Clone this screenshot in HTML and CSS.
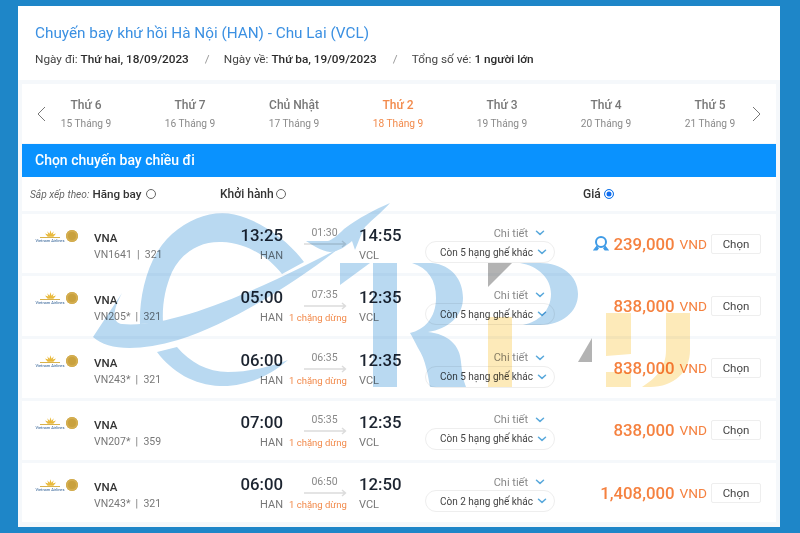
FILE: index.html
```html
<!DOCTYPE html>
<html lang="vi">
<head>
<meta charset="utf-8">
<title>Chuyến bay</title>
<link rel="stylesheet" href="styles.css">
</head>
<body>
<svg width="0" height="0" class="defs">
  <symbol id="chev" viewBox="0 0 10 6"><path d="M1.5 1.2l3.5 3.2 3.5-3.2" fill="none" stroke="#5aa9dc" stroke-width="1.5" stroke-linecap="round" stroke-linejoin="round"/></symbol>
  <symbol id="arrow" viewBox="0 0 43 8"><path d="M0 4h41M38 1l3.5 3L38 7" fill="none" stroke="#dcdcdc" stroke-width="1.4"/></symbol>
  <symbol id="lotus" viewBox="0 0 10 7"><path d="M5 0l.9 3.2L8 .9 7 4l3-.9L7.6 6H2.4L0 3.1 3 4 2 .9l2.1 2.3z" fill="#e9b93a"/></symbol>
</svg>
<div class="page">
  <main class="card">
    <header class="summary">
      <h1 class="title">Chuyến bay khứ hồi Hà Nội (HAN) - Chu Lai (VCL)</h1>
      <p class="meta">
        <span class="meta-a">Ngày đi: <b>Thứ hai, 18/09/2023</b></span><i class="slash">/</i>
        <span class="meta-a">Ngày về: <b>Thứ ba, 19/09/2023</b></span><i class="slash">/</i>
        <span class="meta-a">Tổng số vé: <b>1 người lớn</b></span>
      </p>
    </header>

    <nav class="dates">
      <span class="nav-arrow"><svg width="9" height="16" viewBox="0 0 9 16"><path d="M8 1L1 8l7 7" fill="none" stroke="#777" stroke-width="1"/></svg></span>
      <div class="date-list">
        <div class="date"><strong>Thứ 6</strong><span>15 Tháng 9</span></div>
        <div class="date"><strong>Thứ 7</strong><span>16 Tháng 9</span></div>
        <div class="date"><strong>Chủ Nhật</strong><span>17 Tháng 9</span></div>
        <div class="date active"><strong>Thứ 2</strong><span>18 Tháng 9</span></div>
        <div class="date"><strong>Thứ 3</strong><span>19 Tháng 9</span></div>
        <div class="date"><strong>Thứ 4</strong><span>20 Tháng 9</span></div>
        <div class="date"><strong>Thứ 5</strong><span>21 Tháng 9</span></div>
      </div>
      <span class="nav-arrow"><svg width="9" height="16" viewBox="0 0 9 16"><path d="M1 1l7 7-7 7" fill="none" stroke="#777" stroke-width="1"/></svg></span>
    </nav>

    <h2 class="bar">Chọn chuyến bay chiều đi</h2>

    <div class="sort">
      <div class="sort-a"><em>Sắp xếp theo:</em> <span>Hãng bay</span><i class="radio"></i></div>
      <div class="sort-b"><span class="strong">Khởi hành</span><i class="radio"></i></div>
      <div class="sort-c"><span class="strong">Giá</span><i class="radio on"></i></div>
    </div>

    <section class="row">
      <div class="logo"><div class="mark"><svg class="lotus" width="11" height="8"><use href="#lotus"/></svg><span class="rule"></span><span class="va">Vietnam Airlines</span></div><i class="sun"></i></div>
      <div class="air"><b>VNA</b><span>VN1641 &nbsp;|&nbsp; 321</span></div>
      <div class="dep"><b>13:25</b><span>HAN</span></div>
      <div class="route"><span>01:30</span><svg width="43" height="8"><use href="#arrow"/></svg></div>
      <div class="arr"><b>14:55</b><span>VCL</span></div>
      <div class="more"><div class="detail">Chi tiết<svg width="10" height="6"><use href="#chev"/></svg></div><div class="pill">Còn 5 hạng ghế khác<svg width="10" height="6"><use href="#chev"/></svg></div></div>
      <div class="price"><svg class="award" width="16" height="17" viewBox="0 0 16 17"><circle cx="8" cy="7" r="5" fill="none" stroke="#3f9be6" stroke-width="2"/><path d="M4 11L1 15h3l1.5-2M12 11l3 4h-3l-1.5-2" fill="#3f9be6" stroke="#3f9be6" stroke-width="1.2"/></svg><b>239,000</b><span>VND</span></div>
      <button class="pick">Chọn</button>
    </section>

    <section class="row">
      <div class="logo"><div class="mark"><svg class="lotus" width="11" height="8"><use href="#lotus"/></svg><span class="rule"></span><span class="va">Vietnam Airlines</span></div><i class="sun"></i></div>
      <div class="air"><b>VNA</b><span>VN205* &nbsp;|&nbsp; 321</span></div>
      <div class="dep"><b>05:00</b><span>HAN</span></div>
      <div class="route"><span>07:35</span><svg width="43" height="8"><use href="#arrow"/></svg><em>1 chặng dừng</em></div>
      <div class="arr"><b>12:35</b><span>VCL</span></div>
      <div class="more"><div class="detail">Chi tiết<svg width="10" height="6"><use href="#chev"/></svg></div><div class="pill">Còn 5 hạng ghế khác<svg width="10" height="6"><use href="#chev"/></svg></div></div>
      <div class="price"><b>838,000</b><span>VND</span></div>
      <button class="pick">Chọn</button>
    </section>

    <section class="row">
      <div class="logo"><div class="mark"><svg class="lotus" width="11" height="8"><use href="#lotus"/></svg><span class="rule"></span><span class="va">Vietnam Airlines</span></div><i class="sun"></i></div>
      <div class="air"><b>VNA</b><span>VN243* &nbsp;|&nbsp; 321</span></div>
      <div class="dep"><b>06:00</b><span>HAN</span></div>
      <div class="route"><span>06:35</span><svg width="43" height="8"><use href="#arrow"/></svg><em>1 chặng dừng</em></div>
      <div class="arr"><b>12:35</b><span>VCL</span></div>
      <div class="more"><div class="detail">Chi tiết<svg width="10" height="6"><use href="#chev"/></svg></div><div class="pill">Còn 5 hạng ghế khác<svg width="10" height="6"><use href="#chev"/></svg></div></div>
      <div class="price"><b>838,000</b><span>VND</span></div>
      <button class="pick">Chọn</button>
    </section>

    <section class="row">
      <div class="logo"><div class="mark"><svg class="lotus" width="11" height="8"><use href="#lotus"/></svg><span class="rule"></span><span class="va">Vietnam Airlines</span></div><i class="sun"></i></div>
      <div class="air"><b>VNA</b><span>VN207* &nbsp;|&nbsp; 359</span></div>
      <div class="dep"><b>07:00</b><span>HAN</span></div>
      <div class="route"><span>05:35</span><svg width="43" height="8"><use href="#arrow"/></svg><em>1 chặng dừng</em></div>
      <div class="arr"><b>12:35</b><span>VCL</span></div>
      <div class="more"><div class="detail">Chi tiết<svg width="10" height="6"><use href="#chev"/></svg></div><div class="pill">Còn 5 hạng ghế khác<svg width="10" height="6"><use href="#chev"/></svg></div></div>
      <div class="price"><b>838,000</b><span>VND</span></div>
      <button class="pick">Chọn</button>
    </section>

    <section class="row">
      <div class="logo"><div class="mark"><svg class="lotus" width="11" height="8"><use href="#lotus"/></svg><span class="rule"></span><span class="va">Vietnam Airlines</span></div><i class="sun"></i></div>
      <div class="air"><b>VNA</b><span>VN243* &nbsp;|&nbsp; 321</span></div>
      <div class="dep"><b>06:00</b><span>HAN</span></div>
      <div class="route"><span>06:50</span><svg width="43" height="8"><use href="#arrow"/></svg><em>1 chặng dừng</em></div>
      <div class="arr"><b>12:50</b><span>VCL</span></div>
      <div class="more"><div class="detail">Chi tiết<svg width="10" height="6"><use href="#chev"/></svg></div><div class="pill">Còn 2 hạng ghế khác<svg width="10" height="6"><use href="#chev"/></svg></div></div>
      <div class="price"><b>1,408,000</b><span>VND</span></div>
      <button class="pick">Chọn</button>
    </section>
  </main>

  <svg class="watermark" width="800" height="533" viewBox="0 0 800 533">
    <g fill="#b9d9f1">
      <path d="M140 324C139 295 148 255 172 234C195 214 222 208 246 218C272 228 292 246 304 262L282 274C268 256 246 243 222 242C200 241 182 252 172 272C165 288 162 305 163 323Z"/>
      <path d="M93 337L122 293C112 312 112 322 122 324C165 328 235 300 300 268L338 249C300 279 235 322 178 340C140 351 108 351 93 337Z"/>
      <path d="M157 352L177 347C190 362 207 372 228 372C250 372 272 366 288 360C270 376 245 387 220 386C194 385 172 372 157 352Z"/>
      <path d="M390 203C376 209 358 218 344 229C338 235 332 240 328 241L306 241C312 245 322 251 330 252C338 252 346 246 352 241L355 250C358 243 361 234 365 227C373 219 384 210 390 203Z"/>
      <path d="M340 263H370L340 285Z"/>
      <path d="M373 263H397V387H373Z"/>
      <path d="M412 263H432C452 265 463 280 463 298C463 316 448 329 428 332C448 334 460 345 461 362C462 372 463 380 466 387H430C428 376 426 360 418 348C415 342 412 336 410 333C424 330 436 318 436 298C436 280 428 268 412 263Z"/>
      <path d="M520 263H540C562 263 578 276 578 294C578 312 562 325 540 325H523C538 322 551 311 551 294C551 278 538 266 520 263Z"/>
    </g>
    <g fill="#b3b3b3">
      <path d="M488 263H512L488 287Z"/>
      <path d="M592 338V362H578Z"/>
    </g>
    <g fill="#fdeab9">
      <path d="M488 317H512V387H488Z"/>
      <path d="M606 313H631V354L606 356ZM606 372H631V387H606Z"/>
      <path d="M666 313H690V350C690 372 674 387 650 387H642C656 378 666 368 666 350Z"/>
    </g>
  </svg>
</div>
</body>
</html>
```

FILE: styles.css
```css
* { box-sizing: border-box; }
html, body { margin: 0; padding: 0; }
body { width: 800px; height: 533px; overflow: hidden; background: #1e86c8; font-family: Roboto, "Noto Sans", sans-serif; }
.defs { position: absolute; }
.page { position: relative; width: 800px; height: 533px; padding: 6px 20px 6px 18px; filter: blur(0.4px); }
.card { height: 521px; padding: 0 4px; background: #f5f8fb; display: flex; flex-direction: column; }

.summary { height: 74px; margin: 0 -4px 4px; padding: 18px 0 0 17px; background: #fff; }
.title { margin: 0; font-size: 15.3px; line-height: 19px; font-weight: 400; color: #3b90e2; }
.meta { margin: 8px 0 0; display: flex; font-size: 11.8px; line-height: 16px; color: #444; }
.meta b { font-weight: 500; color: #2b2b2b; }
.slash { font-style: normal; color: #999; margin: 0 16px; width: 3px; }

.dates { height: 59px; margin-bottom: 1px; background: #fff; display: flex; align-items: center; }
.nav-arrow { display: flex; justify-content: center; }
.nav-arrow:first-child { width: 38px; }
.nav-arrow:last-child { flex: 1; }
.date-list { display: flex; gap: 52px; }
.date { width: 52px; display: flex; flex-direction: column; align-items: center; white-space: nowrap; color: #8a8a8a; }
.date strong { font-size: 12px; line-height: 16px; font-weight: 500; color: #777; }
.date span { font-size: 10.2px; line-height: 14px; margin-top: 4px; }
.date.active, .date.active strong { color: #f28a4b; }

.bar { margin: 0; height: 33px; padding-left: 13px; background: #0a92fe; color: #fff; font-size: 14px; line-height: 33px; font-weight: 500; }

.sort { height: 34px; background: #fff; display: grid; grid-template-columns: 198px 363px 1fr; align-items: center; margin-bottom: 3px; font-size: 12px; color: #333; }
.sort-a { padding-left: 8px; display: flex; align-items: center; gap: 3px; white-space: nowrap; }
.sort-a em { font-size: 10.2px; color: #666; }
.sort-a span { font-size: 11.7px; font-weight: 500; color: #333; }
.sort-a .radio { margin-left: 1px; }
.sort-b, .sort-c { display: flex; align-items: center; }
.strong { font-weight: 500; }
.radio { width: 10px; height: 10px; margin-left: 2px; border: 1px solid #666; border-radius: 50%; background: #fff; }
.radio.on { margin-left: 3px; border-color: #1677e8; background: #0d6cf0; box-shadow: inset 0 0 0 1.5px #fff; }

.row { height: 59.25px; margin-bottom: 3px; background: #fff; display: grid; grid-template-columns: 72px 130px 59px 76px 66px 130px 153px 50px; align-items: stretch; }
.row:last-child { margin-bottom: 0; }

.logo { padding: 16px 0 0 13px; display: flex; align-items: flex-start; gap: 1px; }
.mark { width: 30px; display: flex; flex-direction: column; align-items: center; }
.lotus { display: block; }
.rule { display: block; width: 20px; height: 1px; margin-top: -1px; background: #d9b24a; }
.va { font-size: 4px; line-height: 4px; margin-top: 1px; color: #2a5b92; white-space: nowrap; }
.sun { width: 12px; height: 12px; border-radius: 50%; background: #c9a13e; box-shadow: inset 0 0 0 2px #d4ae50; }

.air { padding-top: 17px; display: flex; flex-direction: column; }
.air b { font-size: 11.5px; line-height: 14px; font-weight: 500; color: #333; }
.air span { margin-top: 3px; font-size: 10.5px; line-height: 14px; color: #777; white-space: nowrap; }

.dep, .arr { padding-top: 10px; display: flex; flex-direction: column; }
.dep { align-items: flex-end; }
.dep b, .arr b { font-size: 16.8px; line-height: 22px; font-weight: 500; color: #1c2430; }
.dep span, .arr span { margin-top: 3px; font-size: 11px; line-height: 14px; color: #777; }

.route { padding: 12px 0 0 21px; display: flex; flex-direction: column; align-items: flex-start; }
.route span { width: 41px; text-align: center; font-size: 10.5px; line-height: 14px; color: #888; }
.route svg { display: block; }
.route em { margin: 1px 0 0 -15px; font-style: normal; font-size: 9.5px; line-height: 14px; color: #f28a4b; white-space: nowrap; }

.more { display: flex; flex-direction: column; align-items: stretch; padding-top: 11px; }
.detail { height: 16px; padding-right: 10px; display: flex; align-items: center; justify-content: flex-end; gap: 7px; font-size: 11px; color: #888; }
.pill { height: 22px; padding: 0 7px 0 14px; border: 1px solid #eee; border-radius: 11px; display: flex; align-items: center; justify-content: space-between; font-size: 10px; color: #444; white-space: nowrap; }

.price { display: flex; align-items: center; justify-content: flex-end; gap: 5px; color: #f5813f; white-space: nowrap; }
.price b { font-size: 16.8px; font-weight: 500; }
.price span { font-size: 13.7px; margin-right: 1px; }

.pick { align-self: center; width: 50px; height: 20px; margin-left: 3px; padding: 0; border: 1px solid #eee; border-radius: 2px; background: #fff; font: 11.5px Roboto, sans-serif; color: #444; }

.watermark { position: absolute; left: 0; top: 0; pointer-events: none; mix-blend-mode: multiply; }
```
